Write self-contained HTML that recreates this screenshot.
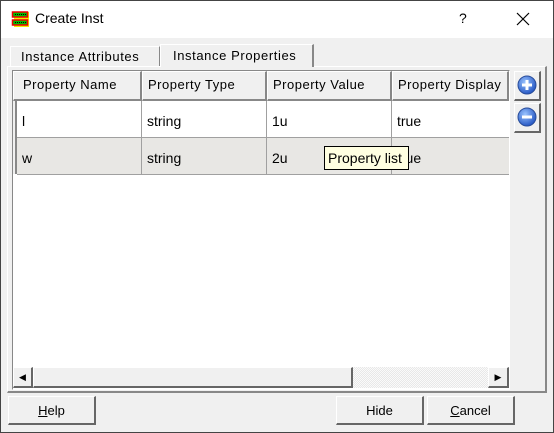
<!DOCTYPE html>
<html><head><style>
*{box-sizing:border-box;margin:0;padding:0}
body{width:554px;height:433px;background:#f0f0f0;font-family:"Liberation Sans",sans-serif;font-size:13px;color:#000;position:relative;overflow:hidden}
.a{position:absolute}
.win{left:0;top:0;width:554px;height:433px;border:1px solid #444}
.title{left:1px;top:1px;width:552px;height:37px;background:#fff}
.tab{border:1px solid #fff;border-right:1px solid #888;border-bottom:none;background:#f0f0f0;font-size:13px;letter-spacing:0.6px;padding-left:10px}
.panel{left:7px;top:66px;width:540px;height:327px;border-left:1px solid #fff;border-top:1px solid #fff;border-right:2px solid #888;border-bottom:2px solid #888}
.tbl{left:12px;top:70px;width:498px;height:320px;background:#fff;border:1px solid #888;border-right:1px solid #fff;border-bottom:1px solid #fff}
.hd{background:#f0f0f0;border-right:2px solid #888;border-bottom:2px solid #888;border-left:1px solid #fff;border-top:1px solid #fff;padding:5px 0 0 5px;letter-spacing:0.5px}
.cell{border-right:1px solid #a0a0a0;border-bottom:1px solid #a0a0a0;padding:12px 0 0 5px;font-size:14px}
.btn{background:#f0f0f0;border-left:1px solid #fff;border-top:1px solid #fff;border-right:2px solid #666;border-bottom:2px solid #666;text-align:center;line-height:25px}
.rb{width:27px;height:30px}
</style></head><body>
<div class="a win"></div>
<div class="a title"></div>
<svg class="a" style="left:11px;top:9px" width="20" height="20" viewBox="0 0 20 20"><rect x="3" y="3" width="15" height="15" fill="#ee0"/><rect x="1.5" y="3" width="15" height="5" fill="#0b0" stroke="#e00" stroke-width="1.5"/><rect x="1.5" y="11" width="15" height="5" fill="#0b0" stroke="#e00" stroke-width="1.5"/><line x1="4" y1="5.5" x2="16" y2="5.5" stroke="#000" stroke-dasharray="1 1"/><line x1="4" y1="13.5" x2="16" y2="13.5" stroke="#000" stroke-dasharray="1 1"/></svg>
<div class="a" style="left:35px;top:10px;font-size:14px">Create Inst</div>
<div class="a" style="left:459px;top:10px;font-size:14px">?</div>
<svg class="a" style="left:516px;top:12px" width="14" height="14"><path d="M1 1L13 13M13 1L1 13" stroke="#000" stroke-width="1.2"/></svg>
<div class="a panel"></div>
<div class="a tab" style="left:10px;top:46px;width:150px;height:20px;line-height:20px">Instance Attributes</div>
<div class="a tab" style="left:160px;top:44px;width:154px;height:23px;line-height:22px;border-right:2px solid #888;padding-left:12px">Instance Properties</div>
<div class="a tbl"></div>
<div class="a hd" style="left:13px;top:71px;width:129px;height:30px;padding-left:9px">Property Name</div>
<div class="a hd" style="left:142px;top:71px;width:125px;height:30px">Property Type</div>
<div class="a hd" style="left:267px;top:71px;width:125px;height:30px">Property Value</div>
<div class="a hd" style="left:392px;top:71px;width:117px;height:30px">Property Display</div>
<div class="a" style="left:13px;top:101px;width:4px;height:73px;background:#f0f0f0;border-right:2px solid #888"></div>
<div class="a" style="left:17px;top:101px;width:492px;height:37px;background:#fff"></div>
<div class="a" style="left:17px;top:138px;width:492px;height:37px;background:#e8e7e4"></div>
<div class="a cell" style="left:17px;top:101px;width:125px;height:37px">l</div>
<div class="a cell" style="left:142px;top:101px;width:125px;height:37px">string</div>
<div class="a cell" style="left:267px;top:101px;width:125px;height:37px">1u</div>
<div class="a cell" style="left:392px;top:101px;width:117px;height:37px;border-right:none">true</div>
<div class="a cell" style="left:17px;top:138px;width:125px;height:37px">w</div>
<div class="a cell" style="left:142px;top:138px;width:125px;height:37px">string</div>
<div class="a cell" style="left:267px;top:138px;width:125px;height:37px">2u</div>
<div class="a cell" style="left:392px;top:138px;width:117px;height:37px;border-right:none">true</div>
<div class="a" style="left:324px;top:146px;width:85px;height:24px;background:#ffffe1;border:1px solid #000;font-size:14px;line-height:22px;padding-left:3px">Property list</div>
<div class="a" style="left:13px;top:367px;width:496px;height:21px;background:repeating-conic-gradient(#e8e8e8 0 25%,#fafafa 0 50%) 0 0/2px 2px"></div>
<div class="a btn" style="left:13px;top:367px;width:20px;height:21px;line-height:19px;font-size:9px">◀</div>
<div class="a btn" style="left:33px;top:367px;width:320px;height:21px"></div>
<div class="a btn" style="left:488px;top:367px;width:21px;height:21px;line-height:19px;font-size:9px">▶</div>
<div class="a btn rb" style="left:514px;top:71px"></div>
<div class="a btn rb" style="left:514px;top:103px"></div>
<svg class="a" style="left:517px;top:75px" width="20" height="20"><defs><radialGradient id="g" cx=".4" cy=".35" r=".7"><stop offset="0" stop-color="#9bc4ff"/><stop offset="1" stop-color="#1d4fbf"/></radialGradient></defs><circle cx="10" cy="10" r="9" fill="url(#g)" stroke="#2a4d9a"/><path d="M5 10H15M10 5V15" stroke="#fff" stroke-width="3"/></svg>
<svg class="a" style="left:517px;top:107px" width="20" height="20"><circle cx="10" cy="10" r="9" fill="url(#g)" stroke="#2a4d9a"/><path d="M5 10H15" stroke="#fff" stroke-width="3"/></svg>
<div class="a btn" style="left:8px;top:396px;width:88px;height:29px;line-height:27px"><u>H</u>elp</div>
<div class="a btn" style="left:336px;top:396px;width:88px;height:29px;line-height:27px">Hide</div>
<div class="a btn" style="left:427px;top:396px;width:88px;height:29px;line-height:27px"><u>C</u>ancel</div>
</body></html>
